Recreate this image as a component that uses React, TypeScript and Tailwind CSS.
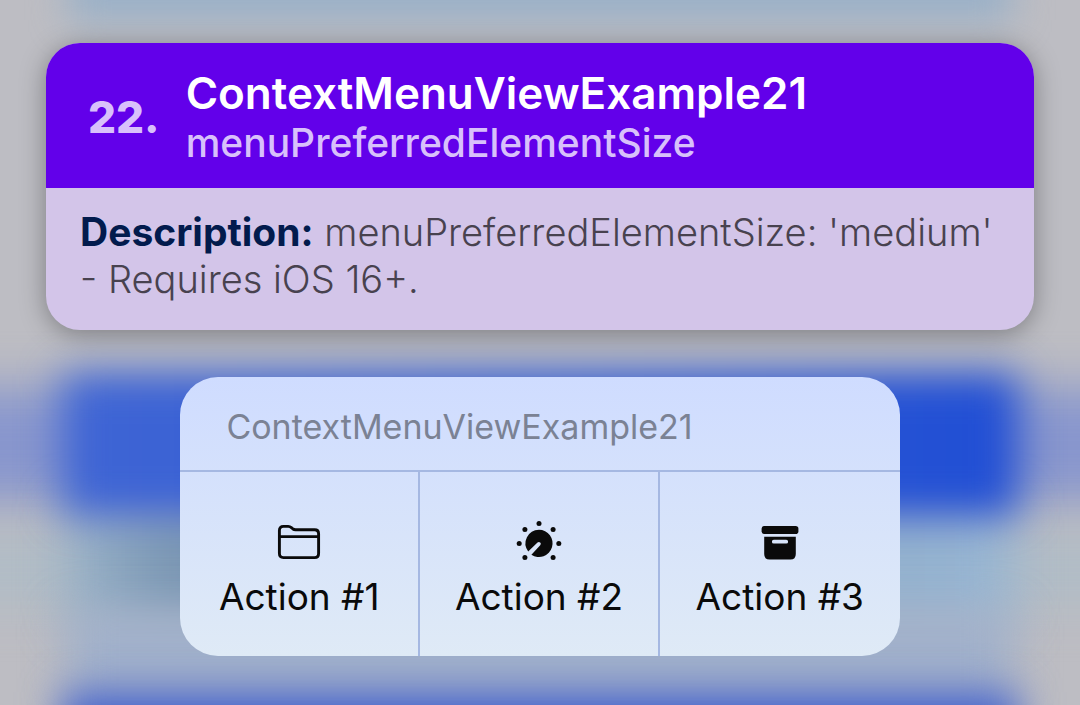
import type { ReactNode } from 'react';

function FolderIcon() {
  return (
    <svg viewBox="0 0 48 44" className="h-11 w-12" fill="none" stroke="#0a0a0a" strokeWidth="2.9" strokeLinejoin="round" aria-hidden="true">
      <path d="M4.4 32.5V9.5Q4.4 5.4 8.4 5.4H13.2Q15 5.4 16.4 6.6L18 8Q19 8.8 20.6 8.8H39.6Q43.6 8.8 43.6 12.8V32.5Q43.6 36.6 39.6 36.6H8.4Q4.4 36.6 4.4 32.5Z" />
      <path d="M4.4 15.6H43.6" strokeWidth="2.6" />
    </svg>
  );
}

function DialIcon() {
  const dots = [
    [24, 2.6],
    [9.9, 8.6],
    [38.1, 8.6],
    [4.2, 22.5],
    [43.8, 22.5],
    [9.9, 36.5],
    [38.1, 36.5],
  ];
  return (
    <svg viewBox="0 0 48 44" className="h-11 w-12" aria-hidden="true">
      <path
        fillRule="evenodd"
        fill="#0a0a0a"
        d="M24 8.8A13.6 13.6 0 1 1 16.4 33.7L25.2 24.3A1.9 1.9 0 0 0 22.5 21.6L13.2 30.5A13.6 13.6 0 0 1 24 8.8Z"
      />
      {dots.map(([x, y]) => (
        <circle key={`${x}-${y}`} cx={x} cy={y} r="2.5" fill="#0a0a0a" />
      ))}
    </svg>
  );
}

function ArchiveIcon() {
  return (
    <svg viewBox="0 0 48 44" className="h-11 w-12" fill="#0a0a0a" aria-hidden="true">
      <rect x="5.6" y="5" width="36.8" height="8" rx="2.8" />
      <path
        fillRule="evenodd"
        d="M8.2 15.8H39.8V33Q39.8 38.6 34.4 38.6H13.6Q8.2 38.6 8.2 33ZM17.8 18.8A1.9 1.9 0 0 0 17.8 22.6H30.2A1.9 1.9 0 0 0 30.2 18.8Z"
      />
    </svg>
  );
}

const actions: { label: string; icon: ReactNode }[] = [
  { label: 'Action #1', icon: <FolderIcon /> },
  { label: 'Action #2', icon: <DialIcon /> },
  { label: 'Action #3', icon: <ArchiveIcon /> },
];

/* Out-of-focus list that sits behind the open menu. */
function Backdrop() {
  return (
    <div className="pointer-events-none absolute inset-0 grid grid-cols-1 grid-rows-1 overflow-hidden bg-[#bdbdc3]" aria-hidden="true">
      <div className="col-start-1 row-start-1 -mx-16 flex flex-col pt-[388px]">
        <div className="h-[115px] bg-[#8896cd] blur-[24px]" />
        <div className="mt-8 h-[70px] bg-[#b0bcc6] blur-[24px]" />
      </div>
      <div className="col-start-1 row-start-1 -mt-8 flex flex-col px-[68px]">
        <div className="h-[52px] bg-[#98b0c8] blur-[18px]" />
        <div className="mt-[484px] h-[120px] bg-linear-to-r from-[#9ab3c9] via-[#7995b2] via-12% to-[#98b6d3] blur-[24px]" />
        <div className="-mt-3 h-[80px] bg-[#a0b0cb] blur-[22px]" />
      </div>
      <div className="col-start-1 row-start-1 flex flex-col gap-[176px] px-[62px] pt-[374px]">
        <div className="h-[142px] shrink-0 bg-linear-to-r from-[#3f65d4] to-[#204ed4] blur-[21px]" />
        <div className="h-[120px] shrink-0 bg-[#3f60ce] blur-[20px]" />
      </div>
    </div>
  );
}

export default function App() {
  return (
    <div className="relative min-h-screen overflow-hidden font-['Inter',sans-serif]">
      <Backdrop />
      <main className="relative flex flex-col items-center px-[46px] pt-[43px] pb-12">
        <article className="w-full overflow-hidden rounded-[34px] bg-[#d3c5e9] shadow-[0_4px_26px_rgba(0,0,0,0.34)]">
          <header className="flex items-center gap-[26px] bg-[#6200ea] px-[42px] pt-6 pb-[21px]">
            <span className="text-[44px] leading-[52px] font-extrabold text-[#d8c0fb]">22.</span>
            <div>
              <h1 className="text-[44px] leading-[52px] font-semibold text-white">ContextMenuViewExample21</h1>
              <p className="text-[39px] leading-[48px] font-medium text-[#d8c0fb]">menuPreferredElementSize</p>
            </div>
          </header>
          <p className="px-[34px] pt-5 pb-[27px] text-[38px] leading-[47px] font-light text-[#48424f]">
            <strong className="text-[39px] font-bold text-[#021b4d]">Description:</strong>
            <span> menuPreferredElementSize: 'medium' - Requires iOS 16+.</span>
          </p>
        </article>

        <section
          aria-labelledby="menu-title"
          className="mt-[47px] w-[72.8%] overflow-hidden rounded-[38px] bg-linear-to-b from-[#cfdcff] to-[#dfeaf6]"
        >
          <h2 id="menu-title" className="border-b-2 border-[#a5b8e2] px-[46px] pt-[29px] pb-[22px] text-[34px] leading-[42px] text-[#7b8294]">
            ContextMenuViewExample21
          </h2>
          <div className="grid grid-cols-3 divide-x-2 divide-[#a5b8e2]">
            {actions.map(({ label, icon }) => (
              <button key={label} type="button" className="flex flex-col items-center gap-2.5 pt-[49px] pb-[37px] text-[37px] leading-[44px] text-[#0a0a0a]">
                {icon}
                <span className="whitespace-nowrap">{label}</span>
              </button>
            ))}
          </div>
        </section>
      </main>
    </div>
  );
}
